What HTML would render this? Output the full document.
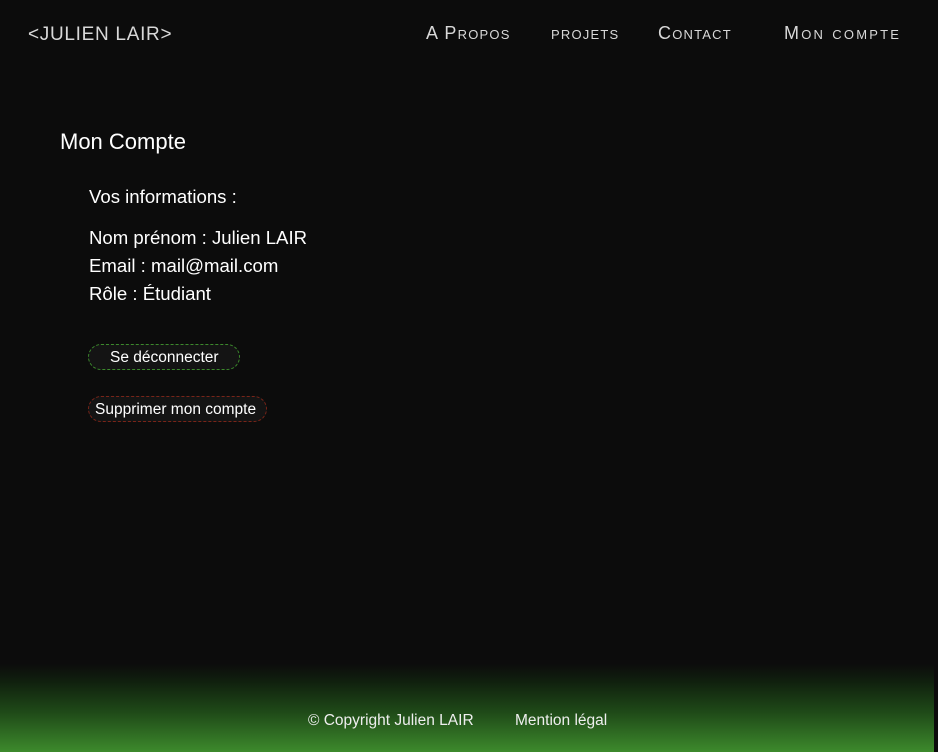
<!DOCTYPE html>
<html><head><meta charset="utf-8"><style>
html,body{margin:0;padding:0;}
body{width:938px;height:752px;background:#0c0c0c;position:relative;overflow:hidden;font-family:"Liberation Sans",sans-serif;color:#fff;}
.logo{position:absolute;left:28px;top:24px;font-family:"Liberation Sans",sans-serif;font-size:19px;color:#d8d8d8;letter-spacing:0.7px;}
.nav a{position:absolute;top:23px;font-family:"Liberation Sans",sans-serif;font-variant:small-caps;font-size:18px;color:#d8d8d8;text-decoration:none;letter-spacing:1.2px;}
h1{position:absolute;left:60px;top:129px;margin:0;font-size:22px;font-weight:normal;}
.t{position:absolute;left:89px;font-size:18.6px;margin:0;}
.btn{position:absolute;left:88px;height:26px;border-radius:14px;font-size:15.5px;line-height:26px;box-sizing:border-box;background:#141414;}
.b1{top:344px;width:152px;border:1px dashed #3c8a2c;padding-left:21px;}
.b2{top:396px;width:179px;border:1px dashed #7a2418;padding-left:6px;}
.foot{position:absolute;left:0;top:664px;width:934px;height:88px;background:linear-gradient(#0c0c0c 0%,#10200e 20%,#1f4a18 55%,#3d8a2c 100%);}
.foot span{position:absolute;top:48px;font-size:15.5px;color:#eee;}
</style></head><body>
<div class="logo">&lt;JULIEN LAIR&gt;</div>
<div class="nav">
<a style="left:426px">A Propos</a>
<a style="left:551px">projets</a>
<a style="left:658px">Contact</a>
<a style="left:784px;letter-spacing:2.2px">Mon compte</a>
</div>
<h1>Mon Compte</h1>
<p class="t" style="top:186px">Vos informations :</p>
<p class="t" style="top:227px">Nom prénom : Julien LAIR</p>
<p class="t" style="top:255px">Email : mail@mail.com</p>
<p class="t" style="top:283px">Rôle : Étudiant</p>
<div class="btn b1">Se déconnecter</div>
<div class="btn b2">Supprimer mon compte</div>
<div class="foot"><span style="left:308px">© Copyright Julien LAIR</span><span style="left:515px">Mention légal</span></div>
</body></html>
